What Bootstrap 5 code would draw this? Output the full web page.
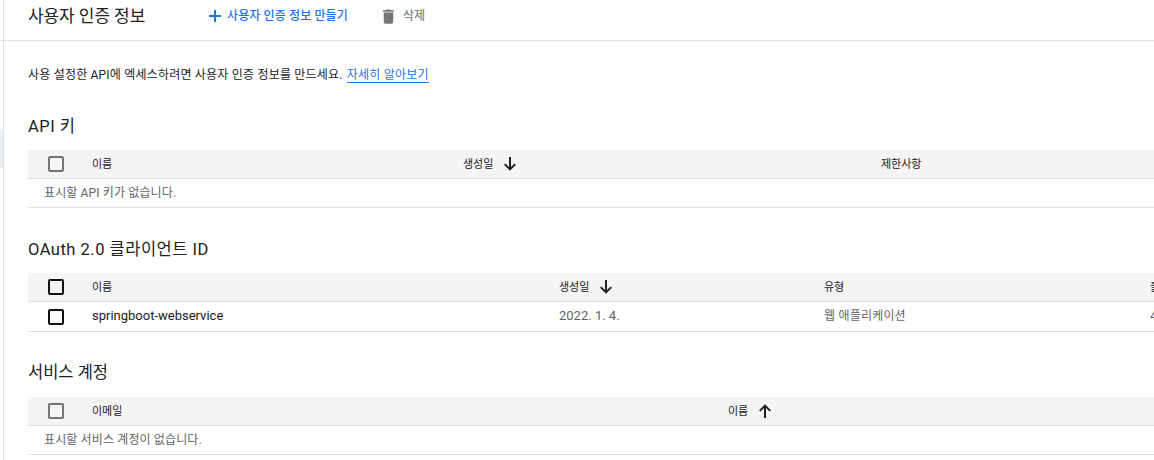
<!DOCTYPE html>
<html lang="ko">
<head>
<meta charset="utf-8">
<title>사용자 인증 정보</title>
<link href="https://cdn.jsdelivr.net/npm/bootstrap@5.3.0/dist/css/bootstrap.min.css" rel="stylesheet">
<style>
html,body{height:460px;overflow:hidden;background:#fff}
body{font-family:Roboto,"Noto Sans CJK KR",sans-serif;font-size:12px;color:#202124}
.shell{height:460px;overflow:hidden}
.rail{width:4px;flex:none;border-right:1px solid #e0e0e0;padding-top:40px}
.rail-tick{height:1px;background:#e0e0e0;margin-bottom:88px}
.rail-sel{height:39px;background:#e8f0fe;width:3px}
.main{flex:1;min-width:0;overflow:hidden}
.topbar{height:41px;border-bottom:1px solid #e0e0e0;padding:0 0 8px 24px}
.page-title{font-size:17px;line-height:30px;margin:0;font-weight:400;width:181px;letter-spacing:-.08px}
.act{font-weight:500;line-height:30px;white-space:nowrap}
.act-create{color:#1a73e8;width:170px;gap:6px;font-size:12px;letter-spacing:.12px}
.act-del{color:#80868b;gap:5px;font-size:12px}
.intro{padding:24px 0 0 24px;height:68px;line-height:20px;font-size:12px;letter-spacing:.2px;margin:0}
.intro a{color:#1a73e8;text-decoration:none;border-bottom:1px solid #1a73e8;padding-bottom:0;margin-left:1px;letter-spacing:.2px}
.sect{padding-left:24px;width:1400px}
.sect h2{font-size:16.500px;font-weight:400;line-height:24px;margin:0}
.sect h2.latin{letter-spacing:.5px}
.h-first{padding-top:6px;height:41px}
.h-next{padding-top:30px;height:65px}
.h-tight{padding-top:29px}
.trow{display:flex;align-items:center;height:29px;border-bottom:1px solid #e0e0e0}
.row-body{height:30px}
.row-body .tcell{margin-bottom:2px}
.thead-r{background:#f4f4f4;font-size:11px;color:#202124}
.thead-r .tcell{margin-top:2px}
.thead-r svg{margin-top:-2px}
.cbox{flex:none;width:16px;height:16px;border:2px solid #111;border-radius:2px;margin:0 28px 0 20px}
.cbox-off{border-color:#757575}
.empty-r{color:#5f6368;padding:0 0 0 16px;font-size:12px;letter-spacing:.13px}
.tcell{flex:none;white-space:nowrap}
.w-a1{width:371px}.w-a2{width:418px}
.w-b1{width:467px}.w-b2{width:265px}.w-b3{width:326px}
.w-c1{width:636px}
.val{color:#5f6368;font-size:12px;letter-spacing:.2px}
.val-num{font-size:13px;letter-spacing:0}
.name-val{font-size:13px;color:#202124}
.sort{gap:11px}
</style>
</head>
<body>
<div class="shell d-flex">
<div class="rail"><div class="rail-tick"></div><div class="rail-sel"></div></div>
<div class="main">
  <div class="topbar d-flex align-items-center">
    <h1 class="page-title">사용자 인증 정보</h1>
    <div class="act act-create d-flex align-items-center">
      <svg width="12" height="12" viewBox="0 0 12 12"><path d="M5 0h2v5h5v2H7v5H5V7H0V5h5z" fill="#1a73e8"/></svg>
      <span>사용자 인증 정보 만들기</span>
    </div>
    <div class="act act-del d-flex align-items-center">
      <svg width="19" height="19" viewBox="0 0 24 24"><path d="M6 19c0 1.100.9 2 2 2h8c1.100 0 2-.9 2-2V7H6zM19 4h-3.500l-1-1h-5l-1 1H5v2h14z" fill="#757575"/></svg>
      <span>삭제</span>
    </div>
  </div>
  <p class="intro">사용 설정한 API에 엑세스하려면 사용자 인증 정보를 만드세요. <a href="#">자세히 알아보기</a></p>

  <section class="sect">
    <div class="h-first"><h2 class="latin">API 키</h2></div>
    <div class="trow thead-r">
      <span class="cbox cbox-off"></span>
      <span class="tcell w-a1">이름</span>
      <span class="tcell w-a2 d-flex align-items-center sort">생성일
        <svg width="12" height="14" viewBox="0 0 12 14"><path d="M5 0h2v10l3.600-3.600L12 7.800 6 13.800 0 7.800l1.400-1.400L5 10z" fill="#202124"/></svg></span>
      <span class="tcell">제한사항</span>
    </div>
    <div class="trow empty-r">표시할 API 키가 없습니다.</div>
  </section>

  <section class="sect">
    <div class="h-next"><h2 class="latin">OAuth 2.0 클라이언트 ID</h2></div>
    <div class="trow thead-r">
      <span class="cbox"></span>
      <span class="tcell w-b1">이름</span>
      <span class="tcell w-b2 d-flex align-items-center sort">생성일
        <svg width="12" height="14" viewBox="0 0 12 14"><path d="M5 0h2v10l3.600-3.600L12 7.800 6 13.800 0 7.800l1.400-1.400L5 10z" fill="#202124"/></svg></span>
      <span class="tcell w-b3">유형</span>
      <span class="tcell">클라이언트 ID</span>
    </div>
    <div class="trow row-body">
      <span class="cbox"></span>
      <span class="tcell w-b1 name-val">springboot-webservice</span>
      <span class="tcell w-b2 val val-num">2022. 1. 4.</span>
      <span class="tcell w-b3 val">웹 애플리케이션</span>
      <span class="tcell val val-num">4</span>
    </div>
  </section>

  <section class="sect">
    <div class="h-next h-tight"><h2>서비스 계정</h2></div>
    <div class="trow thead-r">
      <span class="cbox cbox-off"></span>
      <span class="tcell w-c1">이메일</span>
      <span class="tcell d-flex align-items-center sort">이름
        <svg width="12" height="14" viewBox="0 0 12 14"><path d="M5 14h2V4l3.600 3.600L12 6.200 6 .2 0 6.200l1.400 1.400L5 4z" fill="#202124"/></svg></span>
    </div>
    <div class="trow empty-r">표시할 서비스 계정이 없습니다.</div>
  </section>
</div>
</div>
<script src="https://cdn.jsdelivr.net/npm/bootstrap@5.3.0/dist/js/bootstrap.bundle.min.js"></script>
</body>
</html>
